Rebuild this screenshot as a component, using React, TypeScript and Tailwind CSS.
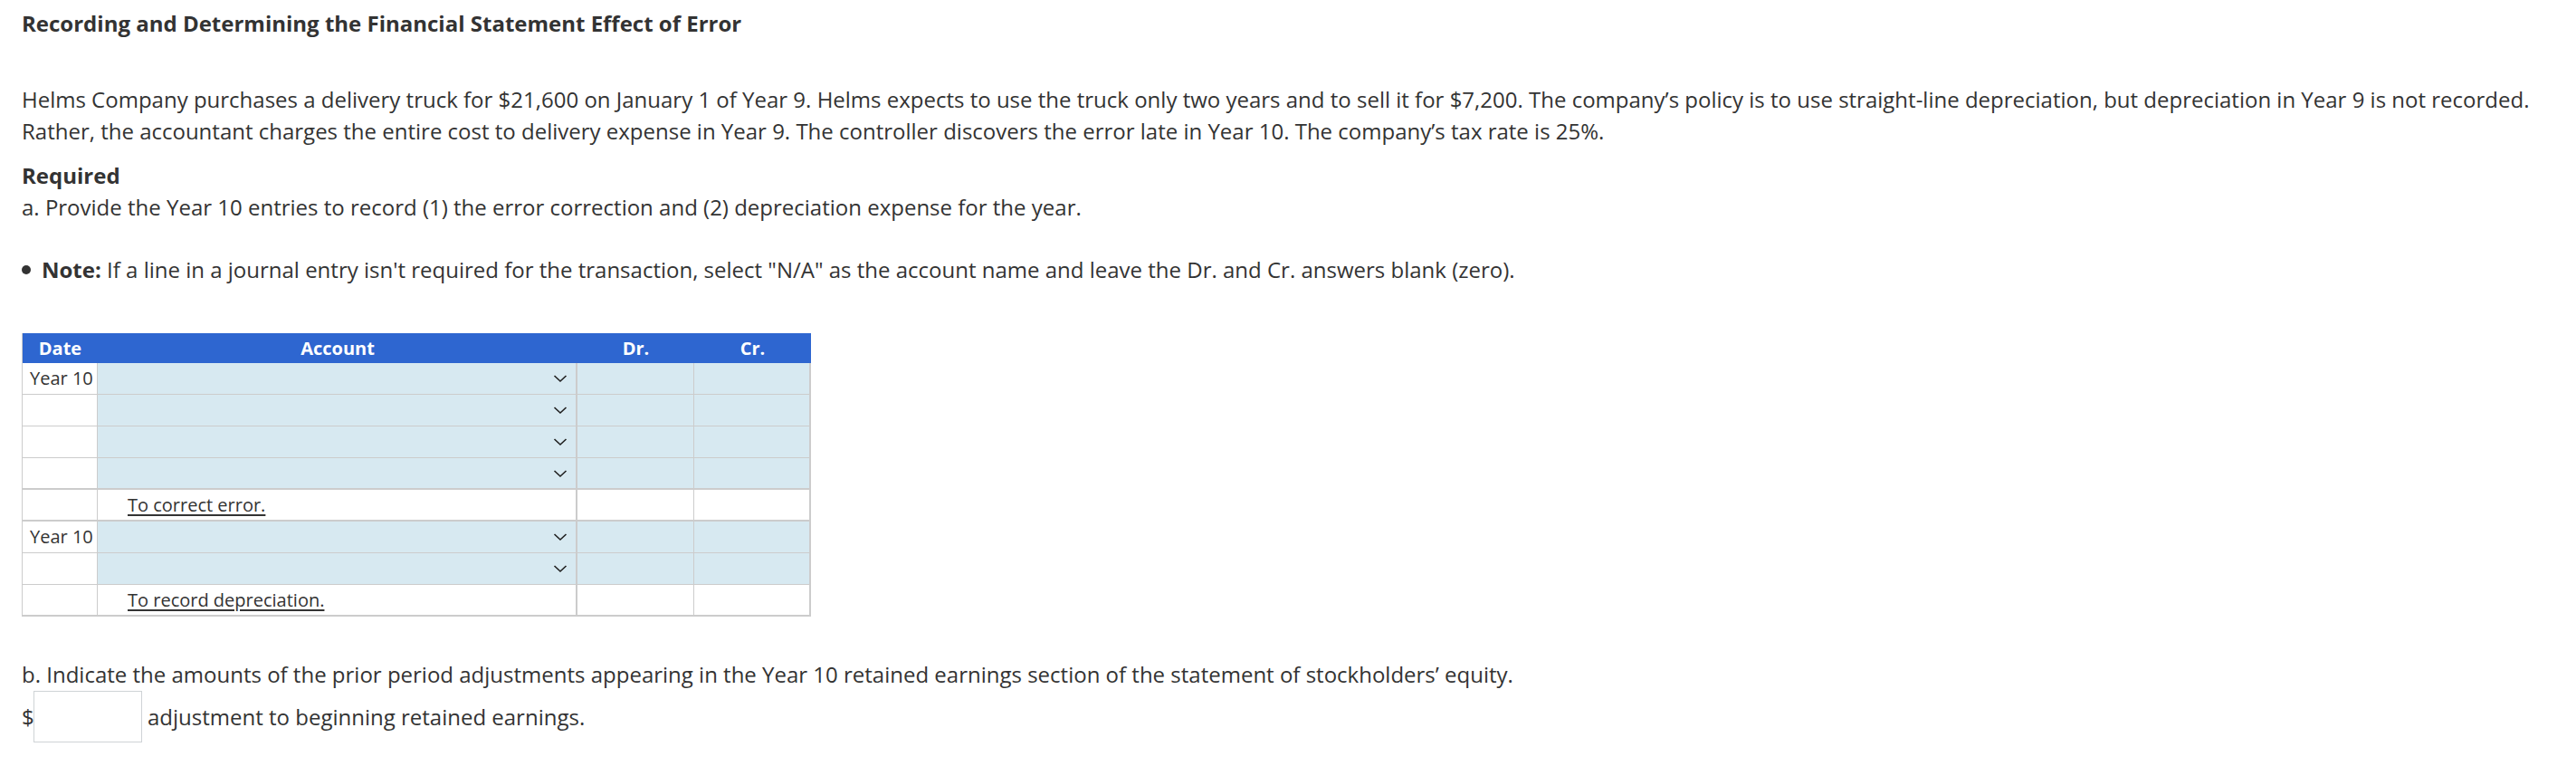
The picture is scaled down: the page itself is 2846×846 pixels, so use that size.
import React from 'react';

type Row = { date?: string; kind: 'input' | 'memo'; memo?: string; thick?: boolean };

const ROWS: Row[] = [
  { date: 'Year 10', kind: 'input' },
  { kind: 'input' },
  { kind: 'input' },
  { kind: 'input', thick: true },
  { kind: 'memo', memo: 'To correct error.', thick: true },
  { date: 'Year 10', kind: 'input' },
  { kind: 'input' },
  { kind: 'memo', memo: 'To record depreciation.' },
];

const Chevron = () => (
  <svg width="16" height="10" viewBox="0 0 16 10" className="shrink-0">
    <polyline points="1.5,2 8,8 14.5,2" fill="none" stroke="#1f1f1f" strokeWidth="1.6" />
  </svg>
);

function JournalTable() {
  return (
    <div className="w-[872px] border-l border-[#cccccc]">
      <div className="flex h-[33px] bg-[#2e66d0] text-white font-bold text-[20px] leading-[33px]">
        <div className="w-[83px] text-center">Date</div>
        <div className="w-[530px] text-center">Account</div>
        <div className="w-[129px] text-center">Dr.</div>
        <div className="flex-1 text-center">Cr.</div>
      </div>
      {ROWS.map((row, i) => {
        const fill = row.kind === 'input' ? 'bg-[#d7e9f1]' : 'bg-white';
        return (
          <div
            key={i}
            className={`flex h-[35px] border-r-2 border-[#cccccc] ${row.thick || i === ROWS.length - 1 ? 'border-b-2' : 'border-b'}`}
          >
            <div className="w-[83px] border-r border-[#cccccc] bg-white pl-[8px] text-[20px] leading-[33px] text-[#333333]">
              {row.date ?? ''}
            </div>
            <div className={`w-[530px] border-r-2 border-[#cccccc] ${fill} flex items-center`}>
              {row.kind === 'input' ? (
                <div className="flex w-full justify-end pr-[9px]"><Chevron /></div>
              ) : (
                <span className="pl-[33px] text-[20px] leading-[33px] text-[#333333] underline underline-offset-[3px]">{row.memo}</span>
              )}
            </div>
            <div className={`w-[129px] border-r border-[#cccccc] ${fill}`} />
            <div className={`flex-1 ${fill}`} />
          </div>
        );
      })}
    </div>
  );
}

export default function App() {
  return (
    <div className="min-h-screen bg-white pl-[24px] pr-[24px] text-[#333333] text-[24px] leading-[35px]" style={{ fontFamily: '"Open Sans", "Noto Sans", sans-serif' }}>
      <h1 className="pt-[8px] text-[24px] leading-[35px] font-bold">
        Recording and Determining the Financial Statement Effect of Error
      </h1>

      <p className="mt-[49px]">
        Helms Company purchases a delivery truck for $21,600 on January 1 of Year 9. Helms expects to use the truck only two years and to sell it for $7,200. The company’s policy is to use straight-line depreciation, but depreciation in Year 9 is not recorded. Rather, the accountant charges the entire cost to delivery expense in Year 9. The controller discovers the error late in Year 10. The company’s tax rate is 25%.
      </p>

      <p className="mt-[14px] font-bold">Required</p>
      <p>a. Provide the Year 10 entries to record (1) the error correction and (2) depreciation expense for the year.</p>

      <p className="mt-[34px] flex items-center">
        <span className="mr-[12px] inline-block h-[10px] w-[10px] rounded-full bg-[#333333]" />
        <span>
          <span className="font-bold">Note:</span> If a line in a journal entry isn't required for the transaction, select "N/A" as the account name and leave the Dr. and Cr. answers blank (zero).
        </span>
      </p>

      <div className="mt-[53px]">
        <JournalTable />
      </div>

      <p className="mt-[46px]">
        b. Indicate the amounts of the prior period adjustments appearing in the Year 10 retained earnings section of the statement of stockholders’ equity.
      </p>
      <div className="mt-[1px] flex items-center">
        <span className="w-[13px]">$</span>
        <div className="h-[57px] w-[120px] border border-[#cfd3d6] bg-white" />
        <span className="ml-[6px]">adjustment to beginning retained earnings.</span>
      </div>
    </div>
  );
}
